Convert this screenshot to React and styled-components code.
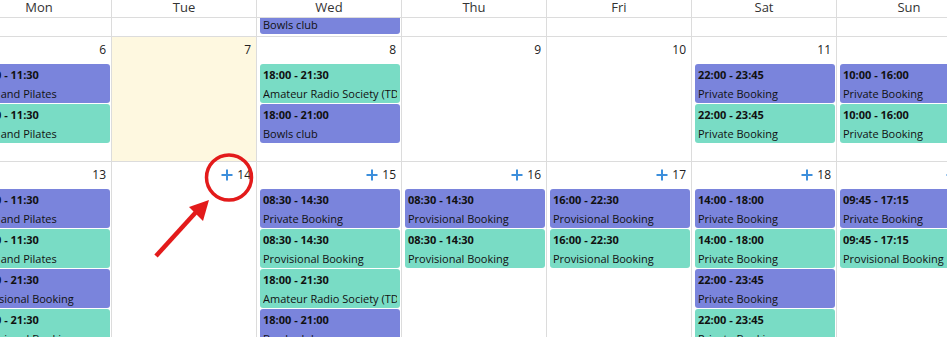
import React from "react";
import styled, { createGlobalStyle } from "styled-components";

const GlobalStyle = createGlobalStyle`
  html, body { margin: 0; padding: 0; background: #fff; }
  body { font-family: "Open Sans", "Noto Sans", sans-serif; color: #222; }
`;

const PURPLE = "#7a84dc";
const GREEN = "#79dcc5";

const days = ["Mon", "Tue", "Wed", "Thu", "Fri", "Sat", "Sun"];

const p = (time, title) => ({ time, title, color: PURPLE });
const g = (time, title) => ({ time, title, color: GREEN });

const lastWeek = [[], [], [p("18:00 - 21:00", "Bowls club")], [], [], [], []];

const weeks = [
  {
    cells: [
      { day: 6, events: [p("09:30 - 11:30", "Yoga and Pilates"), g("09:30 - 11:30", "Yoga and Pilates")] },
      { day: 7, today: true, events: [] },
      { day: 8, events: [g("18:00 - 21:30", "Amateur Radio Society (TDARS)"), p("18:00 - 21:00", "Bowls club")] },
      { day: 9, events: [] },
      { day: 10, events: [] },
      { day: 11, events: [p("22:00 - 23:45", "Private Booking"), g("22:00 - 23:45", "Private Booking")] },
      { day: 12, events: [p("10:00 - 16:00", "Private Booking"), g("10:00 - 16:00", "Private Booking")] },
    ],
  },
  {
    cells: [
      {
        day: 13,
        events: [
          p("09:30 - 11:30", "Yoga and Pilates"),
          g("09:30 - 11:30", "Yoga and Pilates"),
          p("19:30 - 21:30", "Provisional Booking"),
          g("19:30 - 21:30", "Provisional Booking"),
        ],
      },
      { day: 14, add: true, events: [] },
      {
        day: 15,
        add: true,
        events: [
          p("08:30 - 14:30", "Private Booking"),
          g("08:30 - 14:30", "Provisional Booking"),
          g("18:00 - 21:30", "Amateur Radio Society (TDARS)"),
          p("18:00 - 21:00", "Bowls club"),
        ],
      },
      { day: 16, add: true, events: [p("08:30 - 14:30", "Provisional Booking"), g("08:30 - 14:30", "Provisional Booking")] },
      { day: 17, add: true, events: [p("16:00 - 22:30", "Provisional Booking"), g("16:00 - 22:30", "Provisional Booking")] },
      {
        day: 18,
        add: true,
        events: [
          p("14:00 - 18:00", "Private Booking"),
          g("14:00 - 18:00", "Private Booking"),
          p("22:00 - 23:45", "Private Booking"),
          g("22:00 - 23:45", "Private Booking"),
        ],
      },
      { day: 19, add: true, events: [p("09:45 - 17:15", "Private Booking"), g("09:45 - 17:15", "Provisional Booking")] },
    ],
  },
];

export default function App() {
  return (
    <>
      <GlobalStyle />
      <Viewport>
        <Board>
          <Row>
            {days.map((d) => (
              <HeadCell key={d}>{d}</HeadCell>
            ))}
          </Row>
          <Row>
            {lastWeek.map((evs, i) => (
              <TailCell key={i}>
                {evs.map((e, j) => (
                  <Event key={j} event={e} />
                ))}
              </TailCell>
            ))}
          </Row>
          {weeks.map((w, wi) => (
            <Row key={wi}>
              {w.cells.map((c) => (
                <DayCell key={c.day} $today={c.today} $tall={wi === 1}>
                  <DayNum>
                    {c.add && (
                      <AddIcon viewBox="0 0 12 12">
                        <path d="M6 0.5V11.5M0.5 6H11.5" stroke="#3d8fdc" strokeWidth="2" fill="none" />
                      </AddIcon>
                    )}
                    <span>{c.day}</span>
                  </DayNum>
                  <EventList>
                    {c.events.map((e, j) => (
                      <Event key={j} event={e} />
                    ))}
                  </EventList>
                </DayCell>
              ))}
            </Row>
          ))}
        </Board>
        <Annotation viewBox="0 0 947 337">
          <ellipse cx="229" cy="177.5" rx="22.5" ry="22.5" stroke="#e31b1b" strokeWidth="3.5" fill="none" />
          <line x1="156" y1="256" x2="197" y2="211" stroke="#e31b1b" strokeWidth="4.5" />
          <polygon points="209,200 189,207 203,221" fill="#e31b1b" />
        </Annotation>
      </Viewport>
    </>
  );
}

function Event({ event }) {
  return (
    <Chip $color={event.color}>
      <Time>{event.time}</Time>
      <Title>{event.title}</Title>
    </Chip>
  );
}

const Viewport = styled.div`
  position: relative;
  width: 947px;
  height: 337px;
  overflow: hidden;
  background: #fff;
`;

const Board = styled.div`
  margin-left: -33px;
  width: 1015px;
`;

const Row = styled.div`
  display: grid;
  grid-template-columns: repeat(7, 145px);
`;

const HeadCell = styled.div`
  height: 17px;
  line-height: 15px;
  font-size: 13px;
  text-align: center;
  color: #333;
  border-right: 1px solid #dcdcdc;
  border-bottom: 1px solid #dcdcdc;
`;

const TailCell = styled.div`
  height: 16px;
  padding-bottom: 2px;
  display: flex;
  flex-direction: column;
  justify-content: flex-end;
  overflow: hidden;
  border-right: 1px solid #dcdcdc;
  border-bottom: 1px solid #dcdcdc;
`;

const DayCell = styled.div`
  height: ${(p) => (p.$tall ? "200px" : "124px")};
  background: ${(p) => (p.$today ? "#fef8e0" : "#fff")};
  border-right: 1px solid #dcdcdc;
  border-bottom: 1px solid #dcdcdc;
  overflow: hidden;
`;

const DayNum = styled.div`
  height: 18px;
  padding: 4px 5px 5px 0;
  display: flex;
  align-items: center;
  justify-content: flex-end;
  gap: 4px;
  font-size: 12px;
  line-height: 18px;
  color: #222;
`;

const AddIcon = styled.svg`
  width: 12px;
  height: 12px;
  display: block;
`;

const EventList = styled.div`
  display: flex;
  flex-direction: column;
  gap: 1px;
`;

const Chip = styled.div`
  flex: none;
  height: 38px;
  margin: 0 1px 0 3px;
  padding: 1px 3px 0;
  background: ${(p) => p.$color};
  border-radius: 3px;
  font-size: 11px;
  line-height: 19px;
  color: #111;
  overflow: hidden;
  white-space: nowrap;
`;

const Time = styled.div`
  font-weight: 700;
`;

const Title = styled.div`
  overflow: hidden;
`;

const Annotation = styled.svg`
  position: absolute;
  left: 0;
  top: 0;
  width: 947px;
  height: 337px;
  pointer-events: none;
`;
